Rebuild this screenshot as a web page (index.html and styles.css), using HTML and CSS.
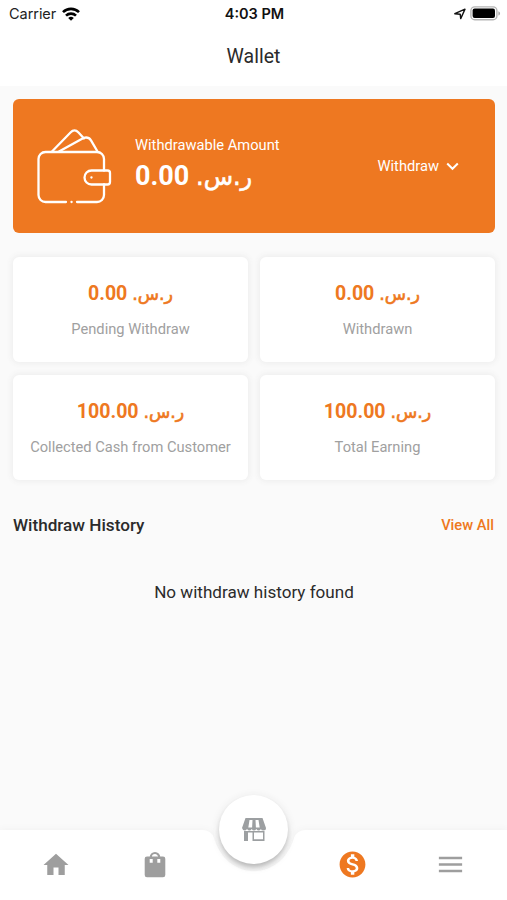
FILE: index.html
```html
<!DOCTYPE html>
<html lang="en">
<head>
<meta charset="utf-8">
<title>Wallet</title>
<link rel="stylesheet" href="styles.css">
</head>
<body>
<div class="screen">
  <header class="top">
    <div class="status">
      <div class="status-left">
        <span class="carrier">Carrier</span>
        <svg class="wifi" viewBox="0 0 18 14" width="18" height="14">
          <g fill="none" stroke="#000" stroke-width="2.6">
            <path d="M1 5.200a11.300 11.300 0 0 1 16 0"/>
            <path d="M4 8.700a7.100 7.100 0 0 1 10 0"/>
          </g>
          <path d="M9 13.800 6.200 11a4 4 0 0 1 5.600 0z"/>
        </svg>
      </div>
      <span class="clock">4:03 PM</span>
      <div class="status-right">
        <svg width="12" height="12" viewBox="0 0 12 12"><path d="M.8 5.700 11 1.200 6.700 10.600 6.200 6.200z" fill="none" stroke="#111" stroke-width="1.400" stroke-linejoin="round"/></svg>
        <svg width="31" height="15" viewBox="0 0 31 15"><rect x=".9" y=".9" width="26" height="12.800" rx="3.800" fill="#fff" stroke="#b5b5b5" stroke-width="1.400"/><rect x="2.600" y="2.600" width="22.400" height="9.400" rx="2"/><path d="M28.400 5.200c2.200.8 2.200 3.600 0 4.400z" fill="#aaa"/></svg>
      </div>
    </div>
    <h1 class="title">Wallet</h1>
  </header>

  <main class="content">
    <section class="banner">
      <svg class="wallet" viewBox="0 0 76 76" width="76" height="76" fill="none" stroke="#fff" stroke-width="2.300" stroke-linecap="round" stroke-linejoin="round">
        <path d="M30 74H9.500a7 7 0 0 1-7-7V31a7 7 0 0 1 7-7H61a7 7 0 0 1 7 7v11.500M68 56.500V67a7 7 0 0 1-7 7H41"/>
        <path d="M16 23.500 34.500 4.500q4-4.200 8 0l5.500 6"/>
        <path d="M23 23.500 47.500 10q4.800-1.600 7.500 2.300L61.500 23.500"/>
        <path d="M55.500 42.500H71.500q2.500 0 2.500 2.500v9q0 2.500-2.500 2.500H55.500a7 7 0 0 1 0-14z"/>
        <path d="M55.400 49.500h.1M35.500 74h.1"/>
      </svg>
      <div class="balance">
        <span class="balance-label">Withdrawable Amount</span>
        <span class="amount amount-large">0.00 <bdi class="cur" dir="rtl" lang="ar">ر.س.</bdi></span>
      </div>
      <div class="withdraw">
        <span>Withdraw</span>
        <svg width="13" height="9" viewBox="0 0 13 9"><path d="m1.200 1.500 5.300 5.300 5.300-5.300" fill="none" stroke="#fff" stroke-width="2"/></svg>
      </div>
    </section>

    <section class="stats">
      <div class="card"><span class="amount">0.00 <bdi class="cur" dir="rtl" lang="ar">ر.س.</bdi></span><span class="card-label">Pending Withdraw</span></div>
      <div class="card"><span class="amount">0.00 <bdi class="cur" dir="rtl" lang="ar">ر.س.</bdi></span><span class="card-label">Withdrawn</span></div>
      <div class="card"><span class="amount">100.00 <bdi class="cur" dir="rtl" lang="ar">ر.س.</bdi></span><span class="card-label">Collected Cash from Customer</span></div>
      <div class="card"><span class="amount">100.00 <bdi class="cur" dir="rtl" lang="ar">ر.س.</bdi></span><span class="card-label">Total Earning</span></div>
    </section>

    <div class="history-head">
      <h2 class="history-title">Withdraw History</h2>
      <span class="view-all">View All</span>
    </div>
    <p class="empty">No withdraw history found</p>
  </main>

  <nav class="nav">
    <svg class="nav-shape" viewBox="0 0 507 71" width="507" height="71"><path fill="#fff" d="M0 1H202Q211 1 214 9C220 29 235 42 254 42S288 29 294 9Q297 1 306 1H507V71H0z"/></svg>
    <div class="nav-item"><svg width="30" height="30" viewBox="0 0 24 24" fill="#9e9e9e"><path d="M10 20v-6h4v6h5v-8h3L12 3 2 12h3v8z"/></svg></div>
    <div class="nav-item"><svg width="22" height="27" viewBox="0 0 22 27" fill="#9e9e9e"><path d="M6.800 7V6.200a4.200 4.200 0 0 1 8.400 0V7" fill="none" stroke="#9e9e9e" stroke-width="2.200"/><path fill-rule="evenodd" d="M3 5.500H19Q21.300 5.500 21.300 7.800V24Q21.300 26.300 19 26.300H3Q.7 26.300.7 24V7.800Q.7 5.500 3 5.500zM5.700 8V11.800H8.700V8zM13.300 8V11.800H16.300V8z"/></svg></div>
    <div class="fab">
      <svg width="26" height="25" viewBox="0 0 26 25">
        <path fill="#9c9fa1" fill-rule="evenodd" d="M4.500 1H21.500L25 11q0 2.500-2.500 2.500T20 12q-1.200 1.500-2.400 1.500T15.300 12q-1.100 1.500-2.300 1.500T10.700 12q-1.100 1.500-2.300 1.500T6 12q-1 1.500-2.500 1.500T1 11zM8.500 3 7.300 10.500h3.800L11.500 3zM14.500 3l.4 7.500h3.800L17.500 3z"/>
        <path fill="#9c9fa1" fill-rule="evenodd" d="M3 14H23.500V24H11.500V15.500H7V24H3zM13 15.500V22.300h9v-6.800z"/>
      </svg>
    </div>
    <div class="nav-item"><svg width="31" height="31" viewBox="0 0 24 24" fill="#ee7821"><path d="M12 2C6.480 2 2 6.480 2 12s4.480 10 10 10 10-4.480 10-10S17.520 2 12 2zm1.410 16.090V20h-2.670v-1.930c-1.710-.36-3.160-1.460-3.270-3.400h1.960c.1 1.050.82 1.870 2.650 1.870 1.960 0 2.400-.98 2.400-1.590 0-.83-.44-1.610-2.670-2.140-2.480-.6-4.180-1.620-4.180-3.670 0-1.720 1.390-2.840 3.110-3.210V4h2.670v1.950c1.860.45 2.790 1.860 2.850 3.390H14.300c-.05-1.110-.64-1.870-2.220-1.870-1.500 0-2.400.68-2.400 1.640 0 .84.65 1.390 2.670 1.910s4.180 1.390 4.180 3.910c-.01 1.830-1.380 2.830-3.120 3.160z"/></svg></div>
    <div class="nav-item"><svg width="31" height="31" viewBox="0 0 24 24" fill="#9e9e9e"><path d="M3 18h18v-2H3v2zm0-5h18v-2H3v2zm0-7v2h18V6H3z"/></svg></div>
  </nav>
</div>
</body>
</html>
```

FILE: styles.css
```css
* { box-sizing: border-box; }

body {
  margin: 0;
  font-family: Roboto, "DejaVu Sans", sans-serif;
  color: #2b2b2b;
}

svg { display: block; flex: none; }

.screen {
  width: 507px;
  height: 900px;
  display: flex;
  flex-direction: column;
  background: #fafafa;
  overflow: hidden;
}

.top { height: 86px; background: #fff; flex: none; }

.status {
  height: 27px;
  display: grid;
  grid-template-columns: 1fr auto 1fr;
  align-items: center;
  padding: 0 6px 0 9px;
  font-family: Inter, sans-serif;
  font-size: 14.5px;
  color: #222;
}

.status-left { display: flex; align-items: center; gap: 6px; }
.carrier { letter-spacing: -.05px; }
.status-right { display: flex; align-items: center; justify-content: flex-end; gap: 4px; }
.clock { font-weight: 600; color: #111; margin-left: -1px; }

.title {
  margin: 16px 0 0;
  text-align: center;
  font-size: 19.5px;
  line-height: 28px;
  font-weight: 400;
}

.content { flex: 1; padding: 13px 12px 0 13px; }

.banner {
  height: 134px;
  display: flex;
  align-items: center;
  padding: 0 36px 0 23px;
  border-radius: 6px;
  background: #ee7821;
  color: #fff;
}

.balance { display: flex; flex-direction: column; margin-left: 23px; flex: 1; }
.balance-label { font-size: 14.7px; line-height: 20px; }

.amount {
  font-size: 19.6px;
  line-height: 24px;
  font-weight: 700;
  color: #ee7821;
  white-space: nowrap;
}

.amount-large { font-size: 27px; line-height: 42px; color: #fff; }

.cur {
  font-family: "DejaVu Sans", sans-serif;
  font-size: .89em;
  font-weight: 400;
  -webkit-text-stroke: .6px currentColor;
}

.withdraw { display: flex; align-items: center; gap: 7px; font-size: 14.7px; }

.stats {
  display: grid;
  grid-template-columns: 1fr 1fr;
  grid-auto-rows: 105px;
  gap: 13px 12px;
  margin-top: 24px;
}

.card {
  display: flex;
  flex-direction: column;
  align-items: center;
  padding-top: 25px;
  gap: 13px;
  border-radius: 6px;
  background: #fff;
  box-shadow: 0 0 6px 1px #ececec;
}

.card-label { font-size: 14.7px; line-height: 20px; color: #a0a0a0; }

.history-head {
  display: flex;
  align-items: center;
  justify-content: space-between;
  height: 24px;
  margin-top: 33px;
  padding-right: 1px;
}

.history-title { margin: 0; font-size: 17.15px; font-weight: 500; }
.view-all { font-size: 14.7px; font-weight: 500; color: #ee7821; }

.empty { margin: 43px 0 0; text-align: center; font-size: 17.1px; line-height: 24px; }

.nav {
  position: relative;
  height: 71px;
  flex: none;
  display: grid;
  grid-template-columns: repeat(5, 98.7px);
  justify-content: center;
}

.nav-shape { position: absolute; left: 0; top: 0; filter: drop-shadow(0 0 3px #f0f0f0); }
.nav-item { position: relative; display: flex; align-items: center; justify-content: center; }

.fab {
  position: relative;
  top: -34px;
  justify-self: center;
  width: 69px;
  height: 69px;
  display: flex;
  align-items: center;
  justify-content: center;
  border-radius: 50%;
  background: #fff;
  box-shadow: 0 4px 5px -1px #b8b8b8, 0 2px 10px #e2e2e2;
}
```
